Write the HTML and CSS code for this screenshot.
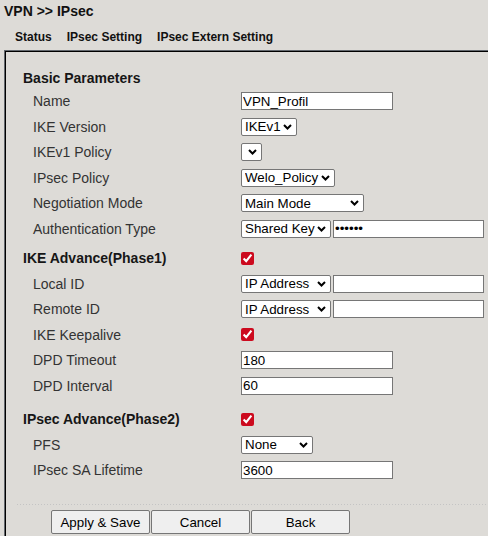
FILE: index.html
```html
<!DOCTYPE html>
<html lang="en">
<head>
    <meta charset="UTF-8">
    <meta name="viewport" content="width=device-width, initial-scale=1.0">
    <title>VPN - IPsec</title>
    <link rel="stylesheet" href="styles.css">
</head>
<body>
    <div class="crumb">VPN &gt;&gt; IPsec</div>
    <nav class="tabs">
        <span>Status</span>
        <span>IPsec Setting</span>
        <span>IPsec Extern Setting</span>
    </nav>
    <div class="panel">
        <form class="form">
            <div class="row sect first"><span class="head">Basic Parameters</span></div>
            <div class="row">
                <label>Name</label>
                <div class="ctl"><input type="text" class="txt" value="VPN_Profil"></div>
            </div>
            <div class="row">
                <label>IKE Version</label>
                <div class="ctl"><select class="sel w-ver"><option>IKEv1</option><option>IKEv2</option></select></div>
            </div>
            <div class="row">
                <label>IKEv1 Policy</label>
                <div class="ctl"><select class="sel w-empty"><option></option></select></div>
            </div>
            <div class="row">
                <label>IPsec Policy</label>
                <div class="ctl"><select class="sel w-policy"><option>Welo_Policy</option></select></div>
            </div>
            <div class="row">
                <label>Negotiation Mode</label>
                <div class="ctl"><select class="sel w-mode"><option>Main Mode</option><option>Aggressive Mode</option></select></div>
            </div>
            <div class="row">
                <label>Authentication Type</label>
                <div class="ctl pair">
                    <select class="sel w-id"><option>Shared Key</option><option>Certificate</option></select>
                    <input type="password" class="txt wide" value="secret">
                </div>
            </div>

            <div class="row sect">
                <span class="head">IKE Advance(Phase1)</span>
                <div class="ctl"><input type="checkbox" class="chk" checked></div>
            </div>
            <div class="row">
                <label>Local ID</label>
                <div class="ctl pair">
                    <select class="sel w-id"><option>IP Address</option><option>FQDN</option></select>
                    <input type="text" class="txt wide">
                </div>
            </div>
            <div class="row">
                <label>Remote ID</label>
                <div class="ctl pair">
                    <select class="sel w-id"><option>IP Address</option><option>FQDN</option></select>
                    <input type="text" class="txt wide">
                </div>
            </div>
            <div class="row">
                <label>IKE Keepalive</label>
                <div class="ctl"><input type="checkbox" class="chk" checked></div>
            </div>
            <div class="row">
                <label>DPD Timeout</label>
                <div class="ctl"><input type="text" class="txt" value="180"></div>
            </div>
            <div class="row">
                <label>DPD Interval</label>
                <div class="ctl"><input type="text" class="txt" value="60"></div>
            </div>

            <div class="row sect late">
                <span class="head">IPsec Advance(Phase2)</span>
                <div class="ctl"><input type="checkbox" class="chk" checked></div>
            </div>
            <div class="row">
                <label>PFS</label>
                <div class="ctl"><select class="sel w-pfs"><option>None</option><option>Group2</option></select></div>
            </div>
            <div class="row">
                <label>IPsec SA Lifetime</label>
                <div class="ctl"><input type="text" class="txt" value="3600"></div>
            </div>
        </form>
        <div class="rule"></div>
        <div class="actions">
            <button type="button" class="btn">Apply &amp; Save</button>
            <button type="button" class="btn">Cancel</button>
            <button type="button" class="btn">Back</button>
        </div>
    </div>
</body>
</html>
```

FILE: styles.css
```css
html, body {
    margin: 0;
    padding: 0;
    height: 100%;
    overflow: hidden;
    background: #dddbd7;
    font-family: "Liberation Sans", Arial, sans-serif;
    color: #222;
}

body {
    box-sizing: border-box;
    padding: 3px 0 0 4px;
}

.crumb {
    font-size: 14px;
    font-weight: bold;
    line-height: 16px;
    color: #111;
}

.tabs {
    display: flex;
    gap: 15px;
    margin-top: 11px;
    padding-left: 11px;
    font-size: 12px;
    font-weight: bold;
    line-height: 14px;
    color: #111;
}

/* framed area; its right and bottom edges sit outside the window */
.panel {
    box-sizing: border-box;
    margin-top: 6px;
    width: 484px;
    height: 486px;
    border-top: 1px solid #62676d;
    border-left: 1px solid #62676d;
    box-shadow: inset 1px 1px 0 #000;
    padding: 16px 0 0 2px;
}

/* two columns: labels, then the controls at a fixed left edge */
.row {
    display: grid;
    grid-template-columns: 218px 1fr;
    align-items: center;
    height: 25.5px;
    padding-left: 16px;
}

.row label {
    padding-left: 10px;
    font-size: 14px;
    color: #333;
}

.sect {
    margin-top: 4px;
}

.sect.first {
    margin-top: 0;
    height: 21.5px;
}

.sect.late {
    margin-top: 8px;
}

.head {
    font-size: 14px;
    font-weight: bold;
    color: #161616;
}

.ctl {
    display: flex;
    align-items: center;
}

.pair {
    gap: 2px;
}

.txt, .sel {
    box-sizing: border-box;
    height: 18px;
    margin: 0;
    border: 1px solid #767676;
    border-radius: 0;
    background-color: #fff;
    font-family: "Liberation Sans", Arial, sans-serif;
    font-size: 13.333px;
    color: #000;
}

.txt {
    width: 152px;
    padding: 0 1px;
}

.txt.wide {
    width: 151px;
}

.sel {
    -webkit-appearance: none;
    appearance: none;
    padding: 0 14px 0 3px;
    background-image: url("data:image/svg+xml,%3Csvg xmlns='http://www.w3.org/2000/svg' width='9' height='6'%3E%3Cpath d='M1 1l3.5 3.5L8 1' fill='none' stroke='%23000' stroke-width='2'/%3E%3C/svg%3E");
    background-repeat: no-repeat;
    background-position: right 4px center;
    border-radius: 2px;
}

.w-ver { width: 56px; }
.w-empty { width: 21px; }
.w-policy { width: 94px; }
.w-mode { width: 123px; }
.w-id { width: 90px; }
.w-pfs { width: 72px; }

.chk {
    width: 13px;
    height: 13px;
    margin: 0;
    accent-color: #cc0a1e;
}

.rule {
    height: 1px;
    margin: 21px 0 0 10px;
    background: repeating-linear-gradient(to right, #c4c4c4 0 1px, transparent 1px 3px);
}

.actions {
    display: flex;
    gap: 1px;
    margin: 5px 0 0 44px;
}

.btn {
    box-sizing: border-box;
    width: 99px;
    height: 24px;
    padding: 0;
    background: #efefef;
    border: 1px solid #767676;
    border-radius: 2px;
    font-family: "Liberation Sans", Arial, sans-serif;
    font-size: 13.333px;
    color: #000;
}
```
